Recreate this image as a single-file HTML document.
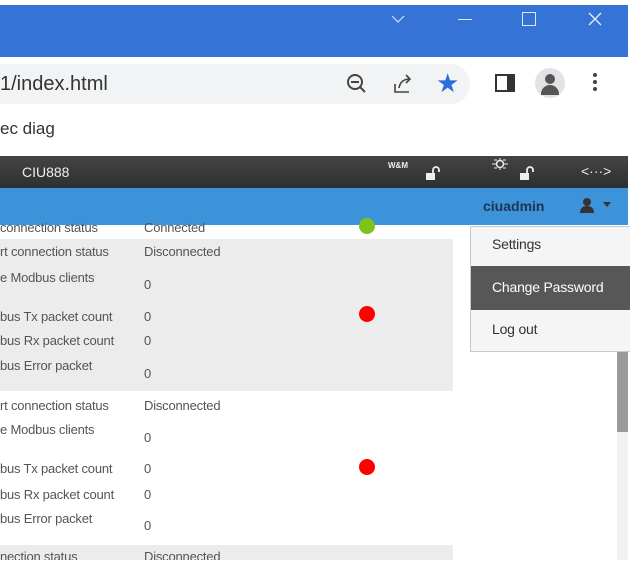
<!DOCTYPE html>
<html><head><style>
*{margin:0;padding:0;box-sizing:border-box}
body{width:635px;height:566px;overflow:hidden;background:#fff;font-family:"Liberation Sans",sans-serif;position:relative}
.a{position:absolute}
.t{font-size:13px;color:#555;position:absolute;white-space:nowrap;letter-spacing:-0.2px}
.dot{position:absolute;width:16px;height:16px;border-radius:50%;background:#f00}
</style></head><body>
<div class="a" style="left:0;top:5px;width:628px;height:52px;background:#3574d6"></div>
<svg class="a" style="left:391px;top:14px" width="14" height="10"><path d="M1 2l6 6 6-6" fill="none" stroke="#cfe0f8" stroke-width="1.2"/></svg>
<div class="a" style="left:458px;top:19px;width:14px;height:1px;background:#dbe6f8"></div>
<div class="a" style="left:522px;top:12px;width:14px;height:14px;border:1px solid #dbe6f8"></div>
<svg class="a" style="left:588px;top:12px" width="14" height="14"><path d="M1 1l12 12M13 1L1 13" stroke="#e6eefa" stroke-width="1.3"/></svg>
<div class="a" style="left:0;top:64px;width:470px;height:40px;background:#f1f3f4;border-radius:0 20px 20px 0"></div>
<div class="a" style="left:0;top:73px;font-size:20px;color:#333">1/index.html</div>
<svg class="a" style="left:345px;top:72px" width="24" height="24" viewBox="0 0 24 24"><circle cx="10" cy="10" r="7" fill="none" stroke="#444" stroke-width="2"/><path d="M6 10h8M15 15l5 5" stroke="#444" stroke-width="2"/></svg>
<svg class="a" style="left:391px;top:72px" width="24" height="24" viewBox="0 0 24 24"><path d="M4 12v8h14M8 16c1-6 5-9 11-9M15 3l4 4-4 4" fill="none" stroke="#444" stroke-width="1.6"/></svg>
<div class="a" style="left:436px;top:68px;color:#2d6ddb;font-size:26px">&#9733;</div>
<div class="a" style="left:495px;top:74px;width:20px;height:18px;border:2px solid #333;border-right-width:8px"></div>
<div class="a" style="left:535px;top:68px;width:30px;height:30px;border-radius:50%;background:#e1e3e6;overflow:hidden"><div class="a" style="left:10px;top:6px;width:10px;height:10px;border-radius:50%;background:#555"></div><div class="a" style="left:6px;top:17px;width:18px;height:10px;border-radius:9px 9px 0 0;background:#555"></div></div>
<div class="a" style="left:593px;top:73px;width:4px;height:4px;border-radius:2px;background:#444;box-shadow:0 7px 0 #444,0 14px 0 #444"></div>
<div class="a" style="left:0;top:119px;font-size:17px;color:#333">ec diag</div>
<div class="a" style="left:0;top:156px;width:628px;height:32px;background:linear-gradient(#444,#2f2f2f)"></div>
<div class="a" style="left:22px;top:164px;color:#eee;font-size:14px">CIU888</div>
<div class="a" style="left:388px;top:161px;color:#eee;font-size:8px;font-weight:bold">W&amp;M</div>
<svg class="a" style="left:424px;top:165px" width="16" height="16"><path d="M9 8V5a3 3 0 0 1 6 0v2" fill="none" stroke="#eee" stroke-width="1.8"/><rect x="2" y="8" width="9" height="7" fill="#eee"/></svg>
<svg class="a" style="left:489px;top:158px" width="22" height="12"><circle cx="11" cy="6" r="3.5" fill="none" stroke="#eee" stroke-width="1.5"/><path d="M3 6h4M15 6h4M11 0v2M11 10v2M5 2h3M14 2h3M5 10h3M14 10h3" stroke="#eee"/></svg>
<svg class="a" style="left:518px;top:165px" width="16" height="16"><path d="M9 8V5a3 3 0 0 1 6 0v2" fill="none" stroke="#eee" stroke-width="1.8"/><rect x="2" y="8" width="9" height="7" fill="#eee"/></svg>
<div class="a" style="left:581px;top:163px;color:#eee;font-size:14px">&lt;&middot;&middot;&middot;&gt;</div>
<div class="a" style="left:0;top:188px;width:628px;height:37px;background:#3d93d9"></div>
<div class="a" style="left:483px;top:198px;color:#1e3550;font-size:14px;font-weight:bold">ciuadmin</div>
<svg class="a" style="left:578px;top:196px" width="18" height="18" viewBox="0 0 18 18"><circle cx="9" cy="6" r="4" fill="#333"/><path d="M2 17c0-5 3-7 7-7s7 2 7 7z" fill="#333"/></svg>
<div class="a" style="left:603px;top:202px;border:4px solid transparent;border-top:5px solid #333"></div>
<div class="a" style="left:0;top:239px;width:453px;height:152px;background:#ececec"></div>
<div class="a" style="left:0;top:545px;width:453px;height:15px;background:#ececec"></div>
<div class="t" style="left:0;top:220px">connection status</div><div class="t" style="left:144px;top:220px">Connected</div>
<div class="dot" style="left:359px;top:218px;background:#7cc41c"></div>
<div class="t" style="left:0;top:244px">rt connection status</div><div class="t" style="left:144px;top:244px">Disconnected</div>
<div class="t" style="left:0;top:270px">e Modbus clients</div><div class="t" style="left:144px;top:277px">0</div>
<div class="t" style="left:0;top:309px">bus Tx packet count</div><div class="t" style="left:144px;top:309px">0</div>
<div class="dot" style="left:359px;top:306px"></div>
<div class="t" style="left:0;top:333px">bus Rx packet count</div><div class="t" style="left:144px;top:333px">0</div>
<div class="t" style="left:0;top:358px">bus Error packet</div><div class="t" style="left:144px;top:366px">0</div>
<div class="t" style="left:0;top:398px">rt connection status</div><div class="t" style="left:144px;top:398px">Disconnected</div>
<div class="t" style="left:0;top:422px">e Modbus clients</div><div class="t" style="left:144px;top:430px">0</div>
<div class="t" style="left:0;top:461px">bus Tx packet count</div><div class="t" style="left:144px;top:461px">0</div>
<div class="dot" style="left:359px;top:459px"></div>
<div class="t" style="left:0;top:487px">bus Rx packet count</div><div class="t" style="left:144px;top:487px">0</div>
<div class="t" style="left:0;top:511px">bus Error packet</div><div class="t" style="left:144px;top:518px">0</div>
<div class="t" style="left:0;top:549px">nection status</div><div class="t" style="left:144px;top:549px">Disconnected</div>
<div class="a" style="left:617px;top:226px;width:11px;height:334px;background:#f1f1f1"></div>
<div class="a" style="left:617px;top:350px;width:11px;height:82px;background:#9a9a9a"></div>
<div class="a" style="left:0;top:560px;width:635px;height:6px;background:#fff"></div>
<div class="a" style="left:470px;top:226px;width:160px;height:126px;background:#f5f5f5;border:1px solid #c8c8c8;border-right:none"></div>
<div class="a" style="left:471px;top:266px;width:159px;height:44px;background:#575757"></div>
<div class="t" style="left:492px;top:236px;color:#333;font-size:14px">Settings</div>
<div class="t" style="left:492px;top:279px;color:#fff;font-size:14px">Change Password</div>
<div class="t" style="left:492px;top:321px;color:#333;font-size:14px">Log out</div>
</body></html>
